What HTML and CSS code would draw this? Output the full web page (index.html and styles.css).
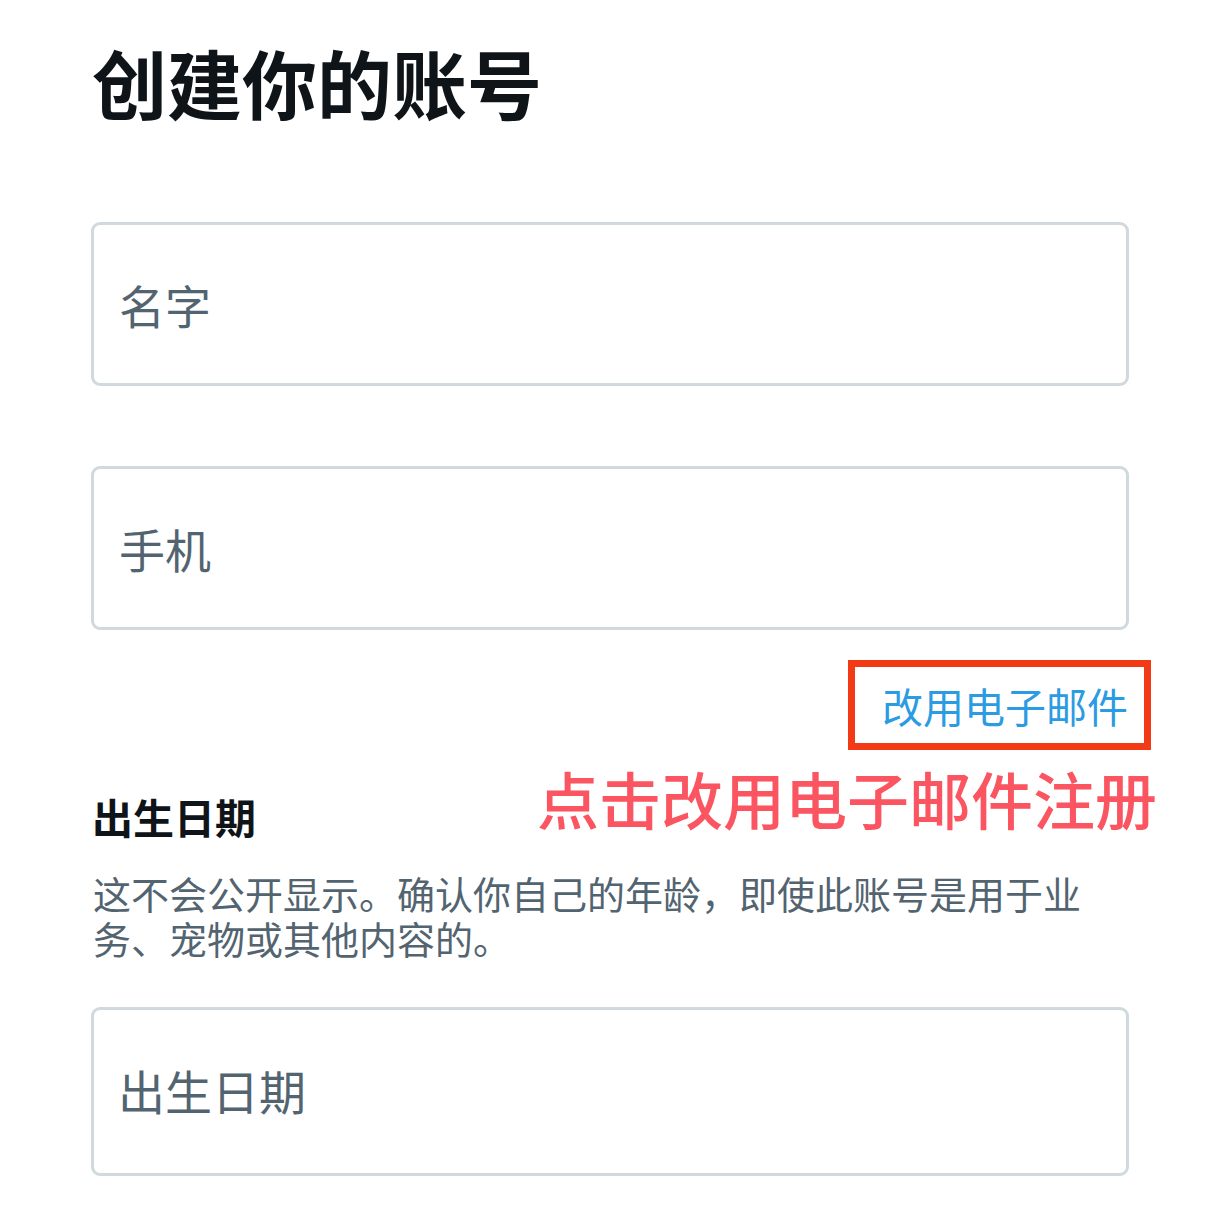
FILE: index.html
```html
<!DOCTYPE html>
<html lang="zh-CN">
<head>
<meta charset="utf-8">
<title>创建你的账号</title>
<link rel="stylesheet" href="styles.css">
</head>
<body>
<main class="page">
  <h1 class="title">创建你的账号</h1>
  <div class="field field-name"><span class="placeholder">名字</span></div>
  <div class="field field-phone"><span class="placeholder">手机</span></div>
  <div class="link-row">
    <div class="link-box"><a class="link">改用电子邮件</a></div>
  </div>
  <div class="dob-row">
    <h2 class="dob-heading">出生日期</h2>
    <div class="annotation">点击改用电子邮件注册</div>
  </div>
  <p class="desc">这不会公开显示。确认你自己的年龄，即使此账号是用于业务、宠物或其他内容的。</p>
  <div class="field field-dob"><span class="placeholder placeholder-lg">出生日期</span></div>
</main>
</body>
</html>
```
FILE: styles.css
```css
* { box-sizing: border-box; }
html, body {
  margin: 0;
  padding: 0;
  background: #ffffff;
}
body {
  font-family: "Noto Sans CJK SC", "Noto Sans", sans-serif;
  width: 1220px;
  height: 1220px;
  overflow: hidden;
}
.page {
  padding-left: 91px;
  width: 1129px;
  display: flex;
  flex-direction: column;
}
.title {
  margin: 44px 0 0 1px;
  font-size: 75px;
  line-height: 75px;
  font-weight: 700;
  color: #0f1419;
}
.field {
  border: 3px solid #cfd9de;
  border-radius: 9px;
  height: 164px;
  display: flex;
  align-items: center;
  padding-left: 25px;
}
.field-name { margin-top: 103px; }
.field-phone { margin-top: 80px; }
.field-dob { margin-top: 47px; height: 169px; padding-left: 24px; padding-bottom: 4px; }
.placeholder {
  font-size: 46px;
  line-height: 1;
  color: #536471;
}
.placeholder-lg {
  font-size: 47px;
}
.link-row {
  display: flex;
  justify-content: flex-end;
  margin-top: 30px;
  margin-right: -22px;
}
.link-box {
  border: 7px solid #f23a16;
  height: 90px;
  padding: 0 16px 0 27px;
  display: flex;
  align-items: center;
}
.link {
  font-size: 41px;
  line-height: 76px;
  color: #2b9be2;
}
.dob-row {
  display: flex;
  justify-content: space-between;
  align-items: flex-end;
  margin-top: 17px;
  margin-right: -28px;
}
.dob-heading {
  margin: 0 0 0 1px;
  font-size: 41px;
  line-height: 41px;
  font-weight: 700;
  color: #0f1419;
}
.annotation {
  font-size: 62px;
  line-height: 62px;
  font-weight: 500;
  color: #fa5560;
  margin-bottom: 8px;
}
.desc {
  margin: 33px 0 0 2px;
  max-width: 1000px;
  font-size: 38px;
  line-height: 45px;
  color: #536471;
}
```
